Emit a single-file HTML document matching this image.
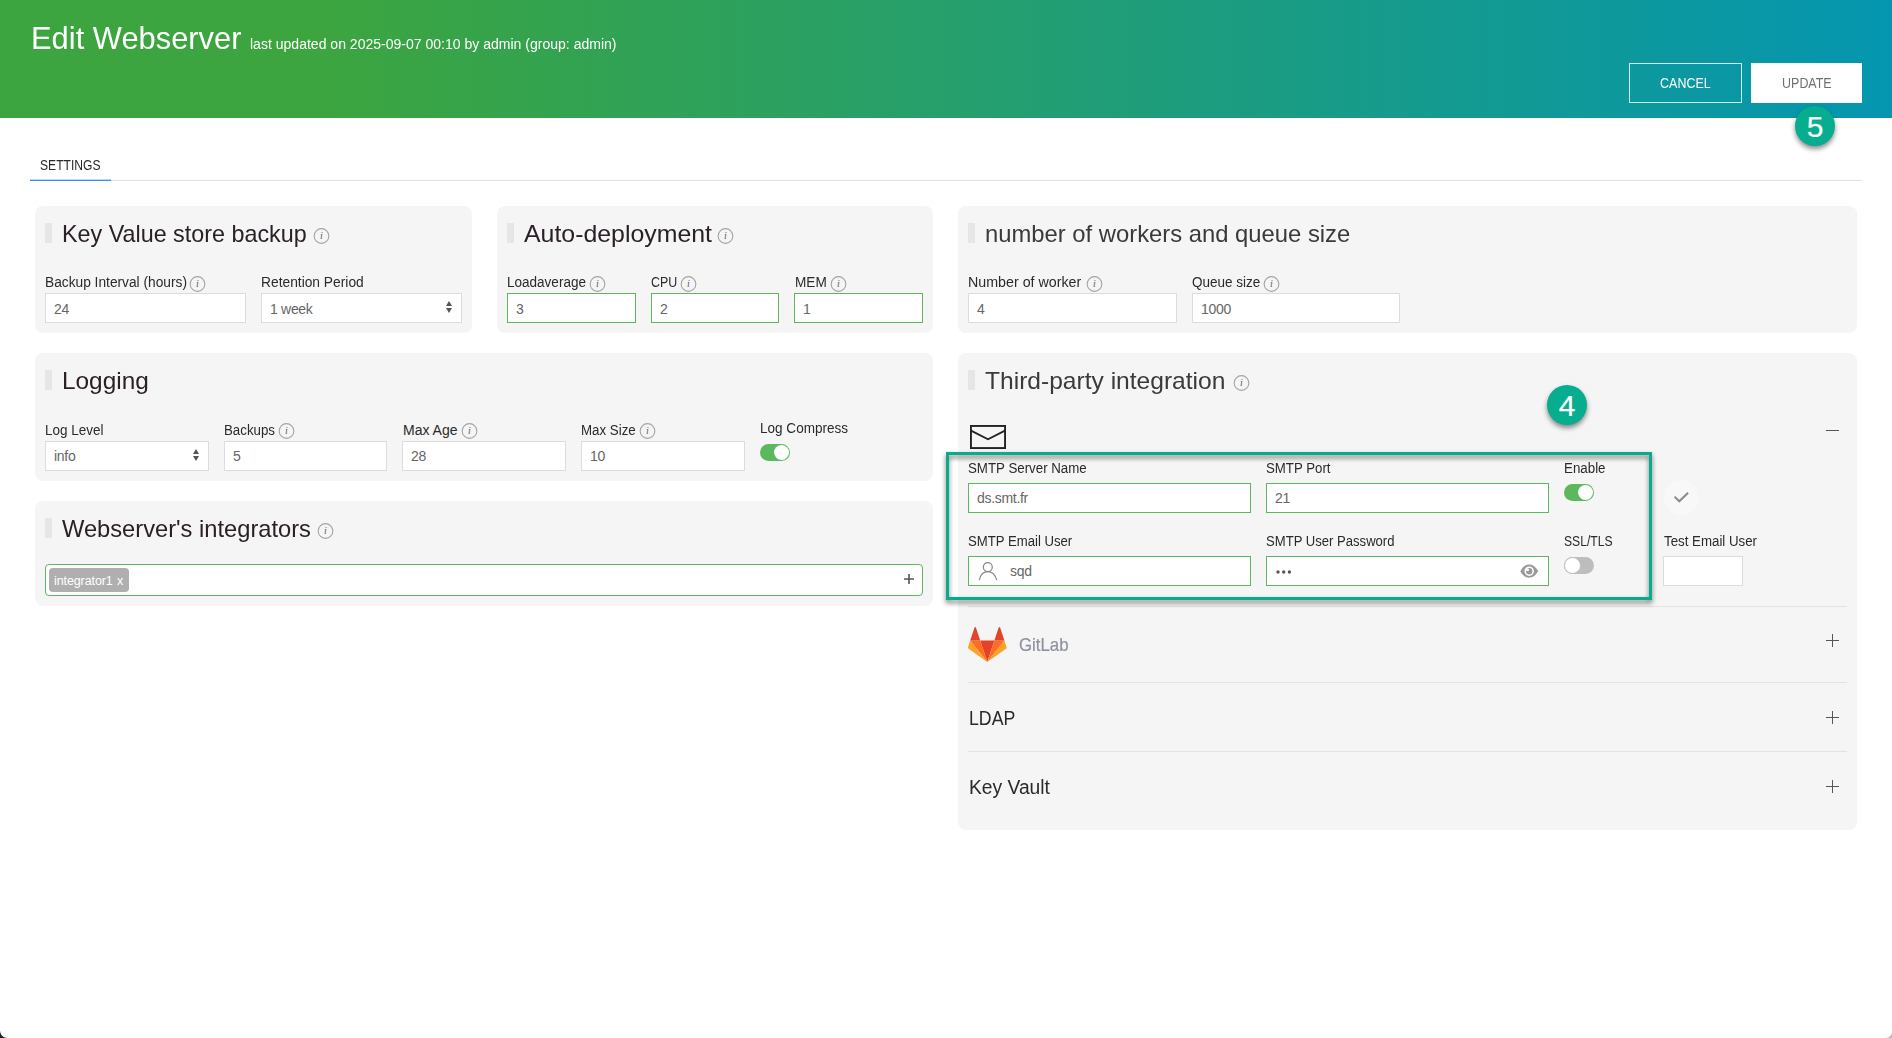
<!DOCTYPE html>
<html lang="en">
<head>
<meta charset="utf-8">
<title>Edit Webserver</title>
<style>
*{box-sizing:border-box;margin:0;padding:0}
html,body{width:1892px;height:1038px;overflow:hidden;background:#fff}
body{font-family:"Liberation Sans",sans-serif;color:#2a2a2a;position:relative}
.abs{position:absolute}
h1,.sub,#tab,.pt,.lb,.acc,.gl{transform-origin:0 50%}
#hdr{position:absolute;left:0;top:0;width:1892px;height:118px;background:linear-gradient(90deg,#3ca53f 0%,#3ca53f 17%,#0496b0 100%)}
#hdr h1{position:absolute;left:31px;top:19px;font-size:32px;font-weight:400;color:#fff;line-height:38px;white-space:nowrap}
#hdr .sub{position:absolute;left:250px;top:36px;font-size:14px;color:#fff;line-height:16px;white-space:nowrap}
.btn{position:absolute;top:63px;height:40px;line-height:38px;text-align:center;font-size:14px;border:1px solid #fff}
#cancel{left:1629px;width:113px;color:#fff;border-color:rgba(255,255,255,.8)}
#update{left:1751px;width:111px;background:#fff;color:#707070}
.btn span{display:inline-block;transform:scaleX(.89)}
.badge{position:absolute;width:40px;height:40px;border-radius:50%;background:#06ad8f;color:#fff;font-size:30px;line-height:41px;text-align:center;box-shadow:0 3px 5px rgba(0,0,0,.45);-webkit-text-stroke:0.2px #fff}
#tab{position:absolute;left:40px;top:157px;font-size:14px;line-height:16px;color:#2a2a2a}
#tabline{position:absolute;left:30px;top:180px;width:1832px;height:1px;background:#e1e1e1}
#tabul{position:absolute;left:30px;top:180px;width:81px;height:1px;background:#3b8ee0;box-shadow:0 -1px 0 rgba(59,142,224,.35)}
.panel{position:absolute;background:#f5f5f5;border-radius:8px}
.bar{position:absolute;left:10px;top:17px;width:7px;height:20px;background:#e6e6e6}
.pt{position:absolute;left:27px;top:14px;font-size:24px;line-height:28px;color:#2b2027;white-space:nowrap}
.lb{position:absolute;font-size:14px;line-height:16px;color:#2a2a2a;white-space:nowrap}
.in{position:absolute;height:30px;background:#fff;border:1px solid #dcdcdc;font-size:14px;line-height:30px;color:#666;padding-left:8px;white-space:nowrap;letter-spacing:-0.3px}
.up .in{line-height:28px}
.in.g{border-color:#5cb85c}
.info{position:absolute;width:15px;height:15px;overflow:visible}
.tg{position:absolute;width:30px;height:17px;border-radius:9px;background:#5cb85c}
.tg i{position:absolute;right:1px;top:1px;width:15px;height:15px;border-radius:50%;background:#fff}
.tg.off{background:#bdbdbd}
.tg.off i{right:auto;left:0;top:0;width:17px;height:17px;border:1px solid #bdbdbd}
.sep{position:absolute;left:10px;width:879px;height:1px;background:#e2e2e2}
.acc{position:absolute;left:11px;font-size:19.5px;line-height:24px;color:#2a2a2a;white-space:nowrap}
</style>
</head>
<body>
<div id="hdr">
  <h1 style="transform:scaleX(0.965)">Edit Webserver</h1>
  <div class="sub" style="transform:scaleX(1.002)">last updated on 2025-09-07 00:10 by admin (group: admin)</div>
  <div class="btn" id="cancel"><span>CANCEL</span></div>
  <div class="btn" id="update"><span>UPDATE</span></div>
</div>
<div style="transform:scaleX(0.864)" id="tab">SETTINGS</div>
<div id="tabline"></div>
<div id="tabul"></div>
<svg width="0" height="0" style="position:absolute">
  <defs>
    <g id="inf" transform="translate(0,0.5)"><circle cx="7.5" cy="7.5" r="7.35" fill="none" stroke="#a4a4a4" stroke-width="1.1"/><text x="7.5" y="10.8" font-family="Liberation Serif,serif" font-style="italic" font-size="10" fill="#5e5e5e" text-anchor="middle">i</text></g>
    <g id="plus"><path d="M0 6.5H13M6.5 0V13" stroke="#555" stroke-width="1" fill="none"/></g>
    <g id="arr"><path d="M0 5L3 0L6 5Z M0 7L3 12L6 7Z" fill="#555"/></g>
  </defs>
</svg>

<!-- P1 -->
<div class="panel" style="left:35px;top:206px;width:437px;height:127px">
  <div class="bar"></div><div class="pt" style="transform:scaleX(0.972)">Key Value store backup</div>
  <svg class="info" style="left:278.5px;top:22px"><use href="#inf"/></svg>
  <div class="lb" style="left:10px;top:68px;transform:scaleX(0.981)">Backup Interval (hours)</div>
  <svg class="info" style="left:155px;top:70px"><use href="#inf"/></svg>
  <div class="in" style="left:10px;top:87px;width:201px">24</div>
  <div class="lb" style="left:226px;top:68px;transform:scaleX(0.985)">Retention Period</div>
  <div class="in" style="left:226px;top:87px;width:201px">1 week</div>
  <svg class="abs" style="left:411px;top:95px" width="6" height="12"><use href="#arr"/></svg>
</div>

<!-- P2 -->
<div class="panel" style="left:497px;top:206px;width:436px;height:127px">
  <div class="bar"></div><div class="pt" style="transform:scaleX(1.036)">Auto-deployment</div>
  <svg class="info" style="left:221px;top:22px"><use href="#inf"/></svg>
  <div class="lb" style="left:10px;top:68px;transform:scaleX(0.966)">Loadaverage</div>
  <svg class="info" style="left:92.5px;top:70px"><use href="#inf"/></svg>
  <div class="in g" style="left:10px;top:87px;width:129px">3</div>
  <div class="lb" style="left:154px;top:68px;transform:scaleX(0.888)">CPU</div>
  <svg class="info" style="left:184px;top:70px"><use href="#inf"/></svg>
  <div class="in g" style="left:154px;top:87px;width:128px">2</div>
  <div class="lb" style="left:298px;top:68px;transform:scaleX(0.972)">MEM</div>
  <svg class="info" style="left:334px;top:70px"><use href="#inf"/></svg>
  <div class="in g" style="left:297px;top:87px;width:129px">1</div>
</div>

<!-- P3 -->
<div class="panel" style="left:958px;top:206px;width:899px;height:127px">
  <div class="bar"></div><div class="pt" style="color:#3a3a3a;transform:scaleX(0.992)">number of workers and queue size</div>
  <div class="lb" style="left:10px;top:68px;transform:scaleX(1.018)">Number of worker</div>
  <svg class="info" style="left:128.5px;top:70px"><use href="#inf"/></svg>
  <div class="in" style="left:10px;top:87px;width:209px">4</div>
  <div class="lb" style="left:234px;top:68px;transform:scaleX(0.964)">Queue size</div>
  <svg class="info" style="left:306px;top:70px"><use href="#inf"/></svg>
  <div class="in" style="left:234px;top:87px;width:208px">1000</div>
</div>

<!-- P4 Logging -->
<div class="panel up" style="left:35px;top:353px;width:898px;height:128px">
  <div class="bar"></div><div class="pt" style="transform:scaleX(1.016)">Logging</div>
  <div class="lb" style="left:10px;top:69px;transform:scaleX(0.963)">Log Level</div>
  <div class="in" style="left:10px;top:88px;width:164px">info</div>
  <svg class="abs" style="left:158px;top:96px" width="6" height="12"><use href="#arr"/></svg>
  <div class="lb" style="left:189px;top:69px;transform:scaleX(0.950)">Backups</div>
  <svg class="info" style="left:243.5px;top:70px"><use href="#inf"/></svg>
  <div class="in" style="left:189px;top:88px;width:163px">5</div>
  <div class="lb" style="left:368px;top:69px;transform:scaleX(1.000)">Max Age</div>
  <svg class="info" style="left:426.5px;top:70px"><use href="#inf"/></svg>
  <div class="in" style="left:367px;top:88px;width:164px">28</div>
  <div class="lb" style="left:546px;top:69px;transform:scaleX(0.951)">Max Size</div>
  <svg class="info" style="left:604.5px;top:70px"><use href="#inf"/></svg>
  <div class="in" style="left:546px;top:88px;width:164px">10</div>
  <div class="lb" style="left:725px;top:67px;transform:scaleX(0.967)">Log Compress</div>
  <div class="tg" style="left:725px;top:91px"><i></i></div>
</div>

<!-- P5 Integrators -->
<div class="panel" style="left:35px;top:501px;width:898px;height:105px">
  <div class="bar"></div><div class="pt" style="transform:scaleX(0.987)">Webserver's integrators</div>
  <svg class="info" style="left:283px;top:22px"><use href="#inf"/></svg>
  <div class="abs" style="left:10px;top:63px;width:878px;height:32px;background:#fff;border:1px solid #5cb85c;border-radius:4px"></div>
  <div class="abs" style="left:14px;top:67px;width:80px;height:24px;background:#afafaf;border-radius:4px;color:#fff;font-size:12.5px;line-height:26px;padding-left:5px;white-space:nowrap;word-spacing:1px;letter-spacing:-0.1px">integrator1 x</div>
  <svg class="abs" style="left:869px;top:73px" width="10" height="10"><path d="M0 5H10M5 0V10" stroke="#555" stroke-width="1.6" fill="none"/></svg>
</div>

<!-- P6 Third-party -->
<div class="panel up" style="left:958px;top:353px;width:899px;height:476.5px">
  <div class="bar"></div><div class="pt" style="color:#3a3a3a;transform:scaleX(1.024)">Third-party integration</div>
  <svg class="info" style="left:275.5px;top:22px"><use href="#inf"/></svg>
  <svg class="abs" style="left:12px;top:72px" width="36" height="24" viewBox="0 0 36 24"><rect x="0.95" y="0.95" width="34.1" height="22.1" fill="none" stroke="#222" stroke-width="1.9"/><path d="M1 5.6L18 14.3L35 5.6" fill="none" stroke="#222" stroke-width="1.8"/></svg>
  <div class="abs" style="left:868px;top:77px;width:13px;height:1px;background:#555"></div>

  <div class="lb" style="left:10px;top:107px;transform:scaleX(0.950)">SMTP Server Name</div>
  <div class="in g" style="left:10px;top:130px;width:283px">ds.smt.fr</div>
  <div class="lb" style="left:308px;top:107px;transform:scaleX(0.946)">SMTP Port</div>
  <div class="in g" style="left:308px;top:130px;width:283px">21</div>
  <div class="lb" style="left:606px;top:107px;transform:scaleX(0.952)">Enable</div>
  <div class="tg" style="left:606px;top:131px"><i></i></div>
  <div class="abs" style="left:705.5px;top:126.5px;width:35px;height:35px;border-radius:50%;background:#f8f8f8"></div>
  <svg class="abs" style="left:716px;top:139px" width="15" height="11" viewBox="0 0 15 11"><path d="M0.5 4.7L5.3 9.3L14.1 0.7" fill="none" stroke="#858a95" stroke-width="2"/></svg>

  <div class="lb" style="left:10px;top:180px;transform:scaleX(0.939)">SMTP Email User</div>
  <div class="in g" style="left:10px;top:203px;width:283px;padding-left:41px">sqd</div>
  <svg class="abs" style="left:20px;top:209px;overflow:visible" width="20" height="19" viewBox="0 0 20 19"><circle cx="9.8" cy="5.1" r="4.5" fill="none" stroke="#888" stroke-width="1.2"/><path d="M1.3 18.2C2.4 12.8 5.6 9.7 9.8 9.7S17.2 12.8 18.8 18.2" fill="none" stroke="#888" stroke-width="1.2"/></svg>
  <div class="lb" style="left:308px;top:180px;transform:scaleX(0.935)">SMTP User Password</div>
  <div class="in g" style="left:308px;top:203px;width:283px"></div>
  <svg class="abs" style="left:318px;top:216.5px" width="16" height="4"><circle cx="2" cy="2" r="1.7" fill="#555"/><circle cx="7.7" cy="2" r="1.7" fill="#555"/><circle cx="13.4" cy="2" r="1.7" fill="#555"/></svg>
  <svg class="abs" style="left:561.8px;top:210.8px" width="18.4" height="14.4" viewBox="0 0 18 14" preserveAspectRatio="none"><path d="M0.3 7C3 2.2 6 0.6 9 0.6S15 2.2 17.7 7C15 11.8 12 13.4 9 13.4S3 11.8 0.3 7Z" fill="#999"/><circle cx="9" cy="7" r="4.6" fill="#fff"/><circle cx="9" cy="7" r="3.1" fill="#999"/><circle cx="7.3" cy="5.6" r="1.5" fill="#fff"/></svg>
  <div class="lb" style="left:606px;top:180px;transform:scaleX(0.866)">SSL/TLS</div>
  <div class="tg off" style="left:606px;top:204px"><i></i></div>
  <div class="lb" style="left:705.5px;top:180px;transform:scaleX(0.949)">Test Email User</div>
  <div class="in" style="left:705px;top:203px;width:80px"></div>

  <div class="sep" style="top:253px"></div>
  <svg class="abs" style="left:10px;top:274px" width="38.6" height="35" viewBox="0 0 39 35" preserveAspectRatio="none">
    <path d="M19.5 35L26.7 13.4H12.3Z" fill="#e24329"/>
    <path d="M19.5 35L12.3 13.4H2.2Z" fill="#fc6d26"/>
    <path d="M2.2 13.4L0.1 20.1a1.5 1.5 0 0 0 .5 1.7L19.5 35Z" fill="#fca326"/>
    <path d="M2.2 13.4H12.3L8 0.5a.75.75 0 0 0-1.4 0Z" fill="#e24329"/>
    <path d="M19.5 35L26.7 13.4H36.8Z" fill="#fc6d26"/>
    <path d="M36.8 13.4L38.9 20.1a1.5 1.5 0 0 1-.5 1.7L19.5 35Z" fill="#fca326"/>
    <path d="M36.8 13.4H26.7L31 0.5a.75.75 0 0 1 1.4 0Z" fill="#e24329"/>
  </svg>
  <div class="abs gl" style="left:61px;top:281px;-webkit-text-stroke:0.2px #8c929d;font-size:19px;line-height:22px;color:#8c929d;white-space:nowrap;transform:scaleX(0.884)" id="gl">GitLab</div>
  <svg class="abs" style="left:868px;top:281px" width="13" height="13"><use href="#plus"/></svg>
  <div class="sep" style="top:329px"></div>
  <div class="acc" style="top:353px;transform:scaleX(0.908)">LDAP</div>
  <svg class="abs" style="left:868px;top:358px" width="13" height="13"><use href="#plus"/></svg>
  <div class="sep" style="top:398px"></div>
  <div class="acc" style="top:422px;transform:scaleX(0.987)">Key Vault</div>
  <svg class="abs" style="left:868px;top:427px" width="13" height="13"><use href="#plus"/></svg>
</div>

<!-- Highlight box + badges -->
<div class="abs" style="left:946px;top:452px;width:706px;height:148px;border:3px solid #06ac8d;filter:drop-shadow(0 3px 2.5px rgba(0,0,0,.55))"></div>
<div class="badge" style="left:1547px;top:385px">4</div>
<div class="badge" style="left:1795px;top:106px">5</div>
<div class="abs" style="left:0;top:1031px;width:7px;height:7px;background:radial-gradient(circle at 100% 0,#fff 6.4px,#1f232b 7.2px)"></div>
<div class="abs" style="left:1886px;top:1032px;width:6px;height:6px;background:radial-gradient(circle at 0 0,#fff 5.4px,#bbb 6.2px)"></div>

</body>
</html>
